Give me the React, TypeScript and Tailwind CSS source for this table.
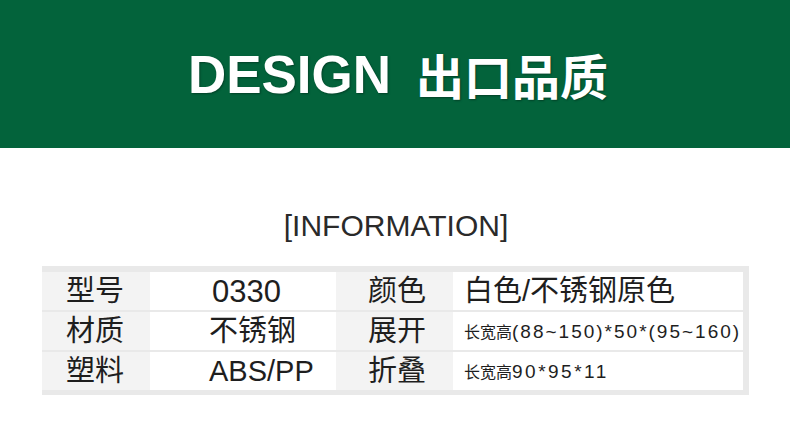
import React from "react";

const font = { fontFamily: '"Liberation Sans", "Noto Sans CJK SC", sans-serif' };

function Row({ l1, v1, l2, v2 }: { l1: string; v1: React.ReactNode; l2: string; v2: React.ReactNode }) {
  return (
    <div className="grid h-[38px] grid-cols-[108px_186px_117px_290px] text-[#1e1e1e]">
      <div className="flex items-center bg-[#f3f3f3] pl-[24px] text-[29px] leading-none">{l1}</div>
      <div className="flex items-center bg-white pl-[59px] text-[29px] leading-none">{v1}</div>
      <div className="flex items-center bg-[#f3f3f3] pl-[32px] text-[29px] leading-none">{l2}</div>
      <div className="flex items-center bg-white pl-[11px] leading-none">{v2}</div>
    </div>
  );
}

export default function App() {
  return (
    <div className="h-[428px] w-[790px] overflow-hidden bg-white" style={font}>
      <div className="flex h-[148px] items-center justify-center bg-[#03633b] pl-[6px] font-bold text-white [text-shadow:1px_1px_2px_rgba(0,0,0,0.35)]">
        <span className="text-[53px] leading-none" style={{ fontFamily: '"Liberation Sans", sans-serif' }}>DESIGN</span>
        <span className="ml-[25px] text-[48px] leading-none" style={{ fontFamily: '"Noto Sans CJK SC", sans-serif' }}>出口品质</span>
      </div>
      <div className="mt-[60px] flex h-[36px] items-center justify-center pl-[2px] text-[30px] leading-none text-[#2a2a2a]">
        [INFORMATION]
      </div>
      <div className="ml-[42px] mt-[22px] flex w-[707px] flex-col gap-[2px] bg-[#e9e9e9] pb-[5px] pt-[6px]">
        <Row
          l1="型号"
          v1={<span className="ml-[3px] text-[31px]">0330</span>}
          l2="颜色"
          v2={<span className="text-[29px]">白色/不锈钢原色</span>}
        />
        <Row
          l1="材质"
          v1="不锈钢"
          l2="展开"
          v2={
            <span className="flex items-baseline">
              <span className="text-[16px]">长宽高</span>
              <span className="text-[19px] tracking-[2px]">(88~150)*50*(95~160)</span>
            </span>
          }
        />
        <Row
          l1="塑料"
          v1="ABS/PP"
          l2="折叠"
          v2={
            <span className="flex items-baseline">
              <span className="text-[16px]">长宽高</span>
              <span className="text-[19px] tracking-[2.5px]">90*95*11</span>
            </span>
          }
        />
      </div>
    </div>
  );
}
